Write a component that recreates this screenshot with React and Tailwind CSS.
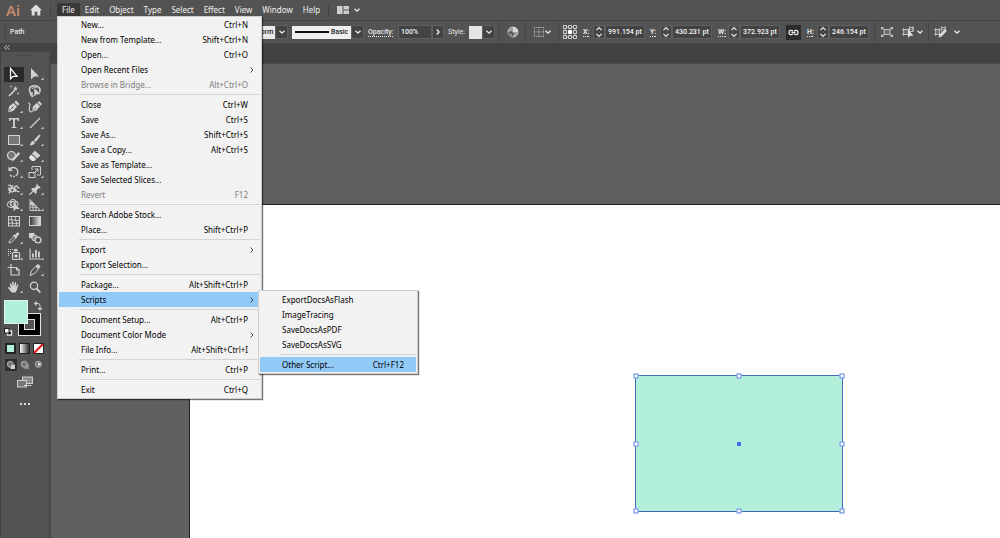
import React from "react";

const fileMenu = [
  ["New...", "Ctrl+N"],
  ["New from Template...", "Shift+Ctrl+N"],
  ["Open...", "Ctrl+O"],
  ["Open Recent Files", ">"],
  ["Browse in Bridge...", "Alt+Ctrl+O", "off"],
  null,
  ["Close", "Ctrl+W"],
  ["Save", "Ctrl+S"],
  ["Save As...", "Shift+Ctrl+S"],
  ["Save a Copy...", "Alt+Ctrl+S"],
  ["Save as Template...", ""],
  ["Save Selected Slices...", ""],
  ["Revert", "F12", "off"],
  null,
  ["Search Adobe Stock...", ""],
  ["Place...", "Shift+Ctrl+P"],
  null,
  ["Export", ">"],
  ["Export Selection...", ""],
  null,
  ["Package...", "Alt+Shift+Ctrl+P"],
  ["Scripts", ">", "open"],
  null,
  ["Document Setup...", "Alt+Ctrl+P"],
  ["Document Color Mode", ">"],
  ["File Info...", "Alt+Shift+Ctrl+I"],
  null,
  ["Print...", "Ctrl+P"],
  null,
  ["Exit", "Ctrl+Q"],
];

const scriptsMenu = [
  ["ExportDocsAsFlash", ""],
  ["ImageTracing", ""],
  ["SaveDocsAsPDF", ""],
  ["SaveDocsAsSVG", ""],
  null,
  ["Other Script...", "Ctrl+F12", "open"],
];

const menuTitles = ["File", "Edit", "Object", "Type", "Select", "Effect", "View", "Window", "Help"];

function MenuEntries({ items, submenu }) {
  return items.map((item, i) => {
    if (!item) {
      return (
        <li key={i} role="separator" className="flex h-[5px] items-center pl-[20px]">
          <span className="h-px w-full bg-[#d4d4d4]" />
        </li>
      );
    }
    const [label, keys, state] = item;
    return (
      <li key={i} className="relative">
        <button
          disabled={state === "off"}
          className={
            "flex h-[15px] w-full items-center justify-between pl-[22px] pr-[12px] text-left whitespace-nowrap " +
            (state === "open" ? "bg-[#91c9f7] " : "") +
            (state === "off" ? "text-[#7d7d7d]" : "text-black")
          }
        >
          <span>{label}</span>
          {keys === ">" ? (
            <svg width="6" height="8" viewBox="0 0 6 8" className="-mr-[7px]" aria-hidden="true">
              <path d="M1.500 1.500 4 4 1.500 6.500" fill="none" stroke="#333" strokeWidth="0.9" />
            </svg>
          ) : (
            <span>{keys}</span>
          )}
        </button>
        {state === "open" && submenu}
      </li>
    );
  });
}

const menuBox =
  "absolute z-10 border border-[#cfcfcf] bg-[#f2f2f2] px-px shadow-[1px_1px_1px_rgba(0,0,0,0.55)] text-[8px] leading-[15px]";

const tools = [
  ["Selection", false, <path d="M5.500 2.500v10.300l2.600-2.500h4z" fill="none" stroke="currentColor" strokeWidth="1.200" />],
  ["Direct Selection", true, <path d="M5 2v11.600l3.200-3.100h4.900z" />],
  ["Magic Wand", false, <g><path d="m4 13 6-6" stroke="currentColor" strokeWidth="1.600" /><path d="m10.500 3 .7 1.700 1.800.1-1.500 1.200.5 1.700-1.500-1-1.500 1 .4-1.700L8 4.800l1.800-.1zM6 2l.4 1 1 .4-1 .4L6 4.800l-.4-1-1-.4 1-.4zM13 9l.4 1 1 .4-1 .4-.4 1-.4-1-1-.4 1-.4z" /></g>],
  ["Lasso", false, <g><path d="M7 10.500C2.500 10 2 4 7 3c5-1 8.500 2 6.500 6.500M6 10.500c-2-.5-2 2 0 1.800 1.500-.3.500 1.500-.5 1.500" fill="none" stroke="currentColor" strokeWidth="1.500" /><path d="M6 6c1-2 4-2.500 5.500-1" fill="none" stroke="currentColor" /><path d="M8.300 5v8.500l2.300-2.300h3.800z" /></g>],
  ["Pen", true, <g><path d="m3 13.300 1.200-6L8.500 4l3.500 3.400-3.700 4.500z" /><path d="m9.300 3.300 1.700-1.700 3.500 3.500-1.700 1.700z" /><path d="m3.500 12.500 4-4" stroke="#535353" strokeWidth=".8" /><circle cx="7.700" cy="8.200" r=".8" fill="#535353" /></g>],
  ["Curvature", false, <g><path d="m6 13 1-5.500 3.800-3.500 3.200 3.200-3.300 4z" /><path d="m11.500 3.500 1.500-1.500 3 3-1.500 1.500z" /><path d="M2 4c2.500 0 2 2 1.500 4-.6 3-.3 5 2.500 4.800" fill="none" stroke="currentColor" strokeWidth="1.200" /><path d="m6.500 12.500 3.500-4" stroke="#535353" strokeWidth=".7" /></g>],
  ["Type", true, <path d="M4 3h10v3h-1.200l-.3-1.500h-2.600v7.300l1.600.4V13H6.500v-.8l1.600-.4V4.500H5.500L5.200 6H4z" />],
  ["Line Segment", true, <path d="m4 13 10-10" stroke="currentColor" strokeWidth="1.200" />],
  ["Rectangle", true, <rect x="3.500" y="3.500" width="11" height="9" fill="#777" stroke="currentColor" strokeWidth="1" />],
  ["Paintbrush", true, <g><path d="M14 2.500c.8.700.2 1.600-.4 2.400L9.700 10 7.800 8.300l5-5.200z" /><path d="M7 8.800 9 10.600c-.3 2.200-2.800 3-5.600 2.700 1.500-.8 1.200-3.700 3.600-4.500z" /></g>],
  ["Shaper", true, <g><circle cx="6.500" cy="7.500" r="4" fill="#777" stroke="currentColor" strokeWidth="1.200" /><path d="m6.500 13.500 1-3L13.500 4l1.700 1.500-5.800 6.500z" /></g>],
  ["Eraser", true, <g><path d="m9 2.700 5.500 4.700-3.400 3.100-5.300-4.700z" /><path d="m5.200 6.500 5 4.600-1.900 1.900H6L3.300 10.500c-.4-.8-.1-1.500.3-2z" fill="#e8e8e8" /></g>],
  ["Rotate", true, <g><path d="M5.200 4.800A4.500 4.500 0 1 1 5 11" fill="none" stroke="currentColor" strokeWidth="1.300" strokeDasharray="15 1 1.500 1" /><path d="M3.500 2.500v4.600h4.400z" /></g>],
  ["Scale", true, <g fill="none" stroke="currentColor"><rect x="3" y="8.500" width="6" height="5" /><path d="M6 6V2.500h8.500V11H11" /><path d="m7.500 9.500 4.500-4.500M9 5h3v3" /></g>],
  ["Width", true, <g><path d="M3 4.500c2.500-1.500 3 1 4 2.500 1.500 2 3-2 4.500-2s.1 2.500 3 2M3 9c1.500-1.500 2 2 4 2s3-2 4.500-1 1.500 1 3 .5M4 12.500 8 4" fill="none" stroke="currentColor" strokeWidth="1.300" /><circle cx="4.500" cy="7.500" r="1.200" /><circle cx="9.800" cy="9" r="1.700" /></g>],
  ["Puppet Warp", true, <g><path d="m10 2.300 4.800 4.500-1.200.7-1-.2-2 2.100.1 2.500-1.200.9L5.200 8.300l.8-1.300h2.600l2-2.200-.1-.9z" /><path d="m7.200 10-3.900 3.900" stroke="currentColor" strokeWidth="1.200" /></g>],
  ["Shape Builder", true, <g><g fill="none" stroke="currentColor"><ellipse cx="8" cy="6" rx="3" ry="3.700" /><ellipse cx="6.200" cy="7.500" rx="3.900" ry="3.200" /><ellipse cx="9.500" cy="7" rx="3.700" ry="3" /></g><path d="M8.500 5.500v8.700l2.400-2.200h4z" /></g>],
  ["Perspective Grid", true, <g fill="none" stroke="currentColor" strokeWidth=".9"><path d="M4 2.500v11h10.500zM7 5v8.500M4 6l5 2.500M4 9.800l8 1M10 8.500v5" /><path d="M4.500 4v4l5 .5z" fill="currentColor" stroke="none" /></g>],
  ["Mesh", false, <g fill="none" stroke="currentColor"><rect x="3.500" y="3.500" width="11" height="9.500" /><path d="M4 7c3-2 5 2 10 0M4 10.500c3-2 5 1.500 10-.5M7 3.500c-2 3 2 5 0 9.500M11 3.500c-2 3 2 6 0 9.500" /></g>],
  ["Gradient", false, <rect x="3.500" y="3.500" width="11" height="9" fill="url(#greyRamp)" stroke="currentColor" />],
  ["Eyedropper", true, <g><path d="m4 13 .4-2 5.300-5.300 1.700 1.700L6 12.600z" fill="none" stroke="currentColor" /><path d="m8.700 5 1.500-.3 1.500-1.700c1.600-1.200 3.200.5 2 2l-1.700 1.600-.3 1.400-.8.5-3-3z" /></g>],
  ["Blend", false, <g><rect x="3" y="3" width="5.500" height="5" /><circle cx="8.600" cy="8" r="2.800" fill="#888" stroke="currentColor" /><circle cx="12" cy="10" r="2.900" fill="#535353" stroke="currentColor" strokeWidth="1.300" /></g>],
  ["Symbol Sprayer", true, <g><rect x="7.500" y="6.500" width="7" height="7" rx="1" fill="none" stroke="currentColor" strokeWidth="1.200" /><rect x="9" y="3" width="3.500" height="2.500" /><circle cx="11" cy="10" r="1.800" /><path d="M3 3h1v1H3zM5 3h1v1H5zM7 3h1v1H7zM3 5h1v1H3zM5 5h1v1H5zM3 7h1v1H3zM5 7h1v1H5zM3 9h1v1H3z" /></g>],
  ["Column Graph", true, <path d="M3.500 2.500h1.100v10H15v1.100H3.500zM6 7.500h1.800v4H6zM9 4h1.800v7.500H9zM12 5.500h1.800v6H12z" />],
  ["Artboard", false, <g fill="none" stroke="currentColor" strokeWidth="1.200"><path d="M6 2v3M2.500 5.500H5M6 5.500h5.500l2.500 2.500v5H6z" /><path d="M11.500 5.500V8H14" /></g>],
  ["Slice", true, <g><path d="m4 13.500 1.800-5.200 4-3.800 2.600 2.300-3.500 4.500z" fill="none" stroke="currentColor" /><path d="m9.500 4 2.500-2 2.600 2.400-1.900 2.500z" /></g>],
  ["Hand", true, <path d="M6.700 13.500 3.200 9.200c-.6-.9.500-1.500 1.200-.9l1.400 1.200L4.900 5c-.2-.9 1-1.200 1.300-.3l1 3.100V3.300c0-1 1.400-1 1.500 0l.3 4.200.9-3.900c.2-.9 1.500-.6 1.400.3l-.5 4.300 1.300-2.500c.4-.8 1.500-.3 1.200.6l-1.600 5-1 2.200z" />],
  ["Zoom", false, <g><circle cx="8" cy="6.800" r="3.600" fill="none" stroke="currentColor" strokeWidth="1.200" /><path d="m10.500 9.500 3.800 3.800" stroke="currentColor" strokeWidth="1.800" /></g>],
];

function Chevron({ className = "" }) {
  return (
    <svg width="8" height="6" viewBox="0 0 8 6" className={"shrink-0 " + className} aria-hidden="true">
      <path d="m1.500 1.700 2.500 2.400 2.500-2.400" fill="none" stroke="#ececec" strokeWidth="1.300" />
    </svg>
  );
}

function DropButton({ label }) {
  return (
    <button aria-label={label} className="flex h-[14px] w-[13px] shrink-0 items-center justify-center border border-[#5f5f5f] bg-[#434343]">
      <Chevron />
    </button>
  );
}

function Divider({ className = "" }) {
  return <span className={"h-[20px] w-px shrink-0 bg-[#464646] " + className} />;
}

function Measure({ id, name, value, className = "" }) {
  return (
    <div className={"flex shrink-0 items-center " + className}>
      <label htmlFor={id} className="w-[10px] font-bold underline decoration-dotted underline-offset-2">
        {name}:
      </label>
      <button aria-label={"Step " + name} className="flex h-[14px] w-[12px] items-center justify-center border border-[#5f5f5f] bg-[#474747]">
        <svg width="8" height="12" viewBox="0 0 8 12" aria-hidden="true">
          <path d="m1.500 4.200 2.500-2.500 2.500 2.500M1.500 7.800 4 10.300l2.500-2.500" fill="none" stroke="#ececec" strokeWidth="1.200" />
        </svg>
      </button>
      <input
        id={id}
        defaultValue={value}
        className="h-[14px] w-[40px] border border-[#5f5f5f] bg-[#434343] pl-[2px] text-[#f4f4f4] outline-none"
      />
    </div>
  );
}

function ControlBar() {
  return (
    <div className="flex h-[23px] items-center border-t border-[#464646] bg-[#535353] font-['Roboto',sans-serif] text-[7px] leading-[10px] font-medium text-[#e6e6e6]">
      <svg width="3" height="16" viewBox="0 0 3 16" className="ml-[4px] shrink-0" aria-hidden="true">
        <path d="M1.500 0v16" stroke="#3f3f3f" strokeWidth="2" strokeDasharray="1 1" />
      </svg>
      <span className="ml-[3px] w-[225px] shrink-0">Path</span>
      <select aria-label="Width profile" className="h-[13px] w-[40px] shrink-0 appearance-none bg-[#e9e9e9] pl-[13px] text-[#222]">
        <option>Uniform</option>
      </select>
      <DropButton label="Width profiles" />
      <div className="ml-[4px] flex h-[13px] w-[59px] shrink-0 items-center justify-between bg-[#efefef] px-[3px] text-[#222]">
        <svg width="34" height="2" viewBox="0 0 34 2" aria-hidden="true">
          <path d="M0 1h34" stroke="#111" strokeWidth="2" />
        </svg>
        <select aria-label="Brush definition" className="w-[17px] appearance-none">
          <option>Basic</option>
        </select>
      </div>
      <DropButton label="Brushes" />
      <label htmlFor="opacity" className="ml-[4px] w-[30px] shrink-0 underline decoration-dotted underline-offset-2">
        Opacity:
      </label>
      <input id="opacity" defaultValue="100%" className="h-[14px] w-[34px] shrink-0 border border-[#5f5f5f] bg-[#434343] pl-[2px] text-[#f4f4f4] outline-none" />
      <button aria-label="Opacity slider" className="flex h-[14px] w-[12px] shrink-0 items-center justify-center border border-[#5f5f5f] bg-[#434343]">
        <Chevron className="-rotate-90" />
      </button>
      <span className="ml-[4px] w-[21px] shrink-0 font-normal">Style:</span>
      <button aria-label="Graphic style" className="h-[13px] w-[13px] shrink-0 bg-[#e4e4e4]" />
      <DropButton label="Graphic styles" />
      <Divider className="ml-[4px]" />
      <button aria-label="Recolor artwork" className="ml-[7px] shrink-0">
        <svg width="12" height="12" viewBox="0 0 12 12" aria-hidden="true">
          <circle cx="6" cy="6" r="5" fill="#9a9a9a" stroke="#c9c9c9" />
          <path d="M6 6V1a5 5 0 0 1 5 5z" fill="#d6d6d6" />
          <path d="M6 6H1a5 5 0 0 0 5 5z" fill="#686868" />
          <circle cx="4" cy="6" r=".8" fill="#333" /><circle cx="6" cy="8" r=".8" fill="#333" /><circle cx="4" cy="8.600" r=".7" fill="#ddd" />
        </svg>
      </button>
      <Divider className="ml-[6px]" />
      <button aria-label="Align" className="ml-[7px] flex shrink-0 items-center">
        <svg width="12" height="12" viewBox="0 0 12 12" fill="#c4c4c4" aria-hidden="true">
          {[1, 3.200, 5.400, 7.600, 9.800].map((a) =>
            [1, 5.400, 9.800].map((b) => (
              <g key={a + "-" + b}>
                <rect x={a} y={b} width="1" height="1" />
                <rect x={b} y={a} width="1" height="1" />
              </g>
            ))
          )}
        </svg>
        <Chevron className="-ml-px" />
      </button>
      <Divider className="ml-[6px]" />
      <button aria-label="Reference point" className="ml-[4px] shrink-0">
        <svg width="14" height="14" viewBox="0 0 14 14" fill="none" stroke="#cfcfcf" aria-hidden="true">
          <path d="M2 2h10v10H2z" strokeWidth=".7" />
          <g fill="#535353"><path d="M.5.500h3v3h-3zM5.500.500h3v3h-3zM10.500.500h3v3h-3zM.5 5.500h3v3h-3zM10.500 5.500h3v3h-3zM.5 10.500h3v3h-3zM5.500 10.500h3v3h-3zM10.500 10.500h3v3h-3z" /></g>
          <path d="M5.500 5.500h3v3h-3z" fill="#fff" stroke="#fff" />
        </svg>
      </button>
      <Measure id="pos-x" name="X" value="991.154 pt" className="ml-[6px]" />
      <Measure id="pos-y" name="Y" value="430.231 pt" className="ml-[5px]" />
      <Measure id="size-w" name="W" value="372.923 pt" className="ml-[6px]" />
      <button aria-label="Constrain proportions" className="ml-[6px] flex h-[15px] w-[15px] shrink-0 items-center justify-center bg-[#2b2b2b]">
        <svg width="11" height="7" viewBox="0 0 11 7" fill="none" stroke="#ededed" strokeWidth="1.300" aria-hidden="true">
          <path d="M5 2C3 .6 1 1.500 1 3.500s2 2.900 4 1.500M6 2c2-1.400 4-.5 4 1.500S8 6.400 6 5M3.500 3.500h4" />
        </svg>
      </button>
      <Measure id="size-h" name="H" value="246.154 pt" className="ml-[6px]" />
      <Divider className="ml-[5px]" />
      <button aria-label="Isolate selected object" className="ml-[5px] shrink-0">
        <svg width="14" height="12" viewBox="0 0 14 12" fill="none" stroke="#c6c6c6" aria-hidden="true">
          <rect x="4" y="3.500" width="6" height="5" fill="#6d6d6d" />
          <path d="m1.500 1.500 2 1.500m7 0 2-1.500m-11 9 2-1.500m7 0 2 1.500" strokeWidth="1.200" />
          <path d="M1.500 3.500v-2h2m7 0h2v2m-11 5v2h2m7 0h2v-2" />
        </svg>
      </button>
      <button aria-label="Select similar objects" className="ml-[8px] flex shrink-0 items-center">
        <svg width="13" height="12" viewBox="0 0 13 12" fill="none" stroke="#bdbdbd" aria-hidden="true">
          <rect x="1.500" y="3.500" width="5" height="5" fill="#707070" /><rect x="7.500" y="1.500" width="3.500" height="4" />
          <path d="M0 3.500h12M1.500 2v8M6.500 2v8M0 8.500h7M7.500 0v6M11 0v6M7 1.500h5" strokeWidth=".7" />
          <path d="M6 3.500v8.200l2.200-2h3.300z" fill="#e0e0e0" stroke="none" />
        </svg>
        <Chevron className="ml-px" />
      </button>
      <Divider className="ml-[4px]" />
      <button aria-label="Edit similar shapes" className="ml-[5px] flex shrink-0 items-center">
        <svg width="13" height="12" viewBox="0 0 13 12" fill="none" stroke="#bdbdbd" aria-hidden="true">
          <rect x="1.500" y="3.500" width="4" height="5" fill="#707070" /><path d="M7 1.500h4.500v3" />
          <path d="M0 3.500h12M1.500 2v8M5.500 2v8M0 8.500h7M7.500 0v6M11 0v4" strokeWidth=".7" />
          <path d="m4.500 11.500 1-3L10.800 3.300l2 1.800-5.500 5.700z" fill="#dcdcdc" stroke="none" />
        </svg>
        <Chevron className="ml-[6px]" />
      </button>
    </div>
  );
}

function ToolsPanel() {
  return (
    <aside className="w-[50px] shrink-0 border-x border-[#444] bg-[#535353] text-[#d2d2d2]">
      <div className="flex h-[9px] items-center bg-[#434343] pl-[3px]">
        <svg width="6" height="5" viewBox="0 0 6 5" aria-hidden="true">
          <path d="M2.500.300.500 2.500l2 2.200M5.300.300l-2 2.200 2 2.200" fill="none" stroke="#ddd" strokeWidth=".9" />
        </svg>
      </div>
      <svg width="14" height="3" viewBox="0 0 14 3" className="mx-auto mt-[2px] mb-[9px] block" aria-hidden="true">
        <path d="M0 1.500h14" stroke="#404040" strokeWidth="2" strokeDasharray="1 1" />
      </svg>
      <div className="ml-[3px] grid h-[229px] w-[42px] grid-cols-2 items-center">
        {tools.map(([name, flyout, art], i) => (
          <button
            key={name}
            aria-label={name}
            className={"flex h-[15px] w-[20px] items-center justify-center " + (i === 0 ? "bg-[#2a2a2a] text-white" : "")}
          >
            <svg width="18" height="16" viewBox="0 0 18 16" fill="currentColor" className="shrink-0" aria-hidden="true">
              {i === 19 && (
                <defs>
                  <linearGradient id="greyRamp"><stop stopColor="#2d2d2d" /><stop offset="1" stopColor="#e8e8e8" /></linearGradient>
                </defs>
              )}
              {art}
              {flyout && <path d="M17.500 11.500v2.500H15z" />}
            </svg>
          </button>
        ))}
      </div>
      <svg width="40" height="38" viewBox="0 0 40 38" className="mt-[5px] ml-[3px]" role="img" aria-label="Fill and stroke">
        <rect x="14.500" y="13.500" width="22" height="22" fill="#000" stroke="#e2e2e2" />
        <rect x="20.500" y="19.500" width="10" height="10" fill="#535353" stroke="#e2e2e2" />
        <rect x=".5" y=".5" width="23" height="23" fill="#b2f0dc" stroke="#dff5ec" />
        <path d="M31.500 3.500h2.500q2 0 2 2V9" fill="none" stroke="#d0d0d0" />
        <path d="M32.500.800v5.400L29.800 3.500zM33.300 8h5.400L36 10.800z" fill="#d0d0d0" />
        <rect x="3.500" y="31" width="4" height="4" fill="#000" stroke="#ddd" strokeWidth="1.500" />
        <rect x=".5" y="28.500" width="4.500" height="4.500" fill="#fff" stroke="#222" />
      </svg>
      <div className="mt-[5px] ml-[4px] flex gap-[3px]">
        <button aria-label="Color" className="h-[11px] w-[11px] border-2 border-[#222] bg-[#b2f0dc]" />
        <button aria-label="Gradient fill" className="h-[11px] w-[11px] border border-[#222] bg-linear-to-r from-[#fff] to-[#333]" />
        <button aria-label="None">
          <svg width="11" height="11" viewBox="0 0 11 11" aria-hidden="true">
            <rect x=".5" y=".5" width="10" height="10" fill="#fff" stroke="#222" /><path d="m1 10 9-9" stroke="#e3131b" strokeWidth="2" />
          </svg>
        </button>
      </div>
      <div className="mt-[5px] ml-[4px] flex gap-[2px]">
        {["Draw Normal", "Draw Behind", "Draw Inside"].map((name, i) => (
          <button key={name} aria-label={name} className={"flex h-[12px] w-[12px] items-center justify-center " + (i === 0 ? "bg-[#2f2f2f]" : "")}>
            <svg width="10" height="10" viewBox="0 0 10 10" aria-hidden="true">
              {i < 2 && <rect x="4.500" y="4.500" width="4.500" height="4.500" fill={i === 0 ? "#ccc" : "#8a8a8a"} />}
              <circle cx="4.300" cy="4.300" r="3" fill="#777" stroke="#b5b5b5" />
              {i === 0 && <rect x="5" y="5" width="4" height="4" fill="#ccc" />}
              {i === 2 && <rect x="4" y="3" width="2.500" height="2.500" fill="#e0e0e0" />}
            </svg>
          </button>
        ))}
      </div>
      <button aria-label="Change screen mode" className="mx-auto mt-[5px] block">
        <svg width="16" height="13" viewBox="0 0 16 13" stroke="#cfcfcf" fill="#535353" aria-hidden="true">
          <rect x="5.500" y="1" width="10" height="6.500" fill="#8a8a8a" /><rect x=".5" y="4.500" width="9" height="6.500" fill="#777" /><path d="M7 9.500h7.500" />
        </svg>
      </button>
      <button aria-label="Edit toolbar" className="mx-auto mt-[14px] flex gap-[2px]">
        <i className="size-[2px] bg-[#ddd]" />
        <i className="size-[2px] bg-[#ddd]" />
        <i className="size-[2px] bg-[#ddd]" />
      </button>
    </aside>
  );
}

const handleSpots = [
  "left-0 top-0", "left-1/2 top-0", "left-full top-0",
  "left-0 top-1/2", "left-full top-1/2",
  "left-0 top-full", "left-1/2 top-full", "left-full top-full",
];

export default function App() {
  return (
    <div className="flex min-h-screen flex-col overflow-hidden bg-[#535353] font-['Noto_Sans','Open_Sans',sans-serif] select-none">
      <header className="relative flex h-[20px] items-center text-[8px] leading-[12px] text-[#f0f0f0]">
        <span className="ml-[6px] w-[24px] shrink-0 font-['Open_Sans',sans-serif] text-[15px] leading-[18px] font-semibold text-[#c98c6b]">Ai</span>
        <button aria-label="Home" className="shrink-0">
          <svg width="12" height="12" viewBox="0 0 12 12" fill="#dedede" aria-hidden="true">
            <path d="M6 .5 0 6.300h1.700V11.500h3V7.800h2.600v3.700h3V6.300H12z" />
          </svg>
        </button>
        <span className="ml-[8px] mr-[6px] h-[13px] w-px shrink-0 bg-[#444]" />
        <nav className="flex shrink-0">
          {menuTitles.map((t, i) => (
            <button key={t} className={"px-[5px] py-px " + (i === 0 ? "bg-[#383838]" : "")}>
              {t}
            </button>
          ))}
        </nav>
        <span className="ml-[3px] h-[13px] w-px shrink-0 bg-[#444]" />
        <button aria-label="Arrange documents" className="ml-[8px] flex items-center gap-[4px]">
          <svg width="12" height="8" viewBox="0 0 12 8" fill="#cdcdcd" aria-hidden="true">
            <path d="M0 0h5.500v8H0zM6.500 0H12v3.500H6.500zM6.500 4.500H12V8H6.500z" />
          </svg>
          <Chevron />
        </button>
        <ul className={menuBox + " left-[57px] top-[16px] w-[205px] pb-px"}>
          <MenuEntries
            items={fileMenu}
            submenu={
              <ul className={menuBox + " -top-[2px] left-[199px] w-[160px] py-px"}>
                <MenuEntries items={scriptsMenu} />
              </ul>
            }
          />
        </ul>
      </header>
      <ControlBar />
      <main className="flex flex-1 bg-[#606060]">
        <ToolsPanel />
        <div className="flex flex-1 flex-col border-l border-[#484848]">
          <div className="h-[21px] border-b border-[#4b4b4b] bg-[#424242]" />
          <section className="mt-[140px] ml-[138px] flex-1 border-t border-l border-[#1e1e1e] bg-white">
            <div className="relative ml-[445px] mt-[170px] h-[137px] w-[208px] border border-[#4468b8] bg-[#b2f0dc]">
              {handleSpots.map((p) => (
                <i key={p} className={"absolute size-[5px] -translate-x-1/2 -translate-y-1/2 border border-[#5b82e6] bg-white " + p} />
              ))}
              <i className="absolute top-1/2 left-1/2 size-[4px] -translate-x-1/2 -translate-y-1/2 bg-[#3f6ef0]" />
            </div>
          </section>
        </div>
      </main>
    </div>
  );
}
